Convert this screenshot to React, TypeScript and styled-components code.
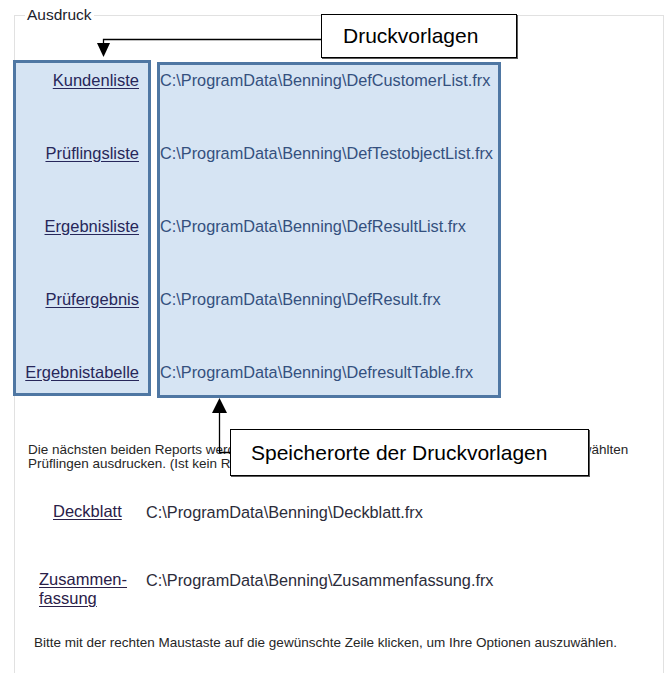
import styled, { createGlobalStyle } from "styled-components";

const GlobalStyle = createGlobalStyle`
	html, body {
		margin: 0;
		padding: 0;
		background: #ffffff;
		overflow: hidden;
	}
	body {
		font-family: "Liberation Sans", Arial, sans-serif;
		color: #222222;
	}
`;

const Page = styled.div`
	position: relative;
	width: 669px;
	height: 673px;
	padding-top: 6px;
	box-sizing: border-box;
	overflow: hidden;
`;

const GroupBox = styled.fieldset`
	margin: 0 5px 0 14px;
	padding: 0;
	min-height: 720px;
	border: 1px solid #e1e1e1;
	box-sizing: border-box;
`;

const Legend = styled.legend`
	margin-left: 10px;
	padding: 0 2px;
	font-size: 15.5px;
	line-height: 18px;
	color: #1c1c2c;
`;

const Templates = styled.div`
	display: flex;
	align-items: flex-start;
	gap: 6px;
	margin: 36px 0 0 -2px;
`;

const HighlightBox = styled.div<{ $width: number; $pad: string; $shift?: number }>`
	display: grid;
	grid-auto-rows: 20px;
	row-gap: 53px;
	width: ${(p) => p.$width}px;
	margin-top: ${(p) => p.$shift || 0}px;
	padding: ${(p) => p.$pad};
	box-sizing: border-box;
	border: 3px solid #4f77a3;
	background: #d6e4f3;
`;

const LabelCell = styled.div`
	justify-self: end;
	font-size: 16.5px;
	line-height: 20px;
	white-space: nowrap;
`;

const Link = styled.span<{ $inBox?: boolean }>`
	color: ${(p) => (p.$inBox ? "#27275a" : "#2a2048")};
	text-decoration: underline;
	text-underline-offset: 2px;
	cursor: pointer;
`;

const PathText = styled.div<{ $inBox?: boolean }>`
	font-size: 16.3px;
	line-height: 20px;
	white-space: nowrap;
	color: ${(p) => (p.$inBox ? "#34507e" : "#2c2c3a")};
`;

const Note = styled.p`
	margin: 45px 0 0 13px;
	font-size: 13.5px;
	line-height: 14px;
	white-space: nowrap;
	color: #262626;
`;

const ExtraList = styled.div`
	display: grid;
	grid-template-columns: 90px auto;
	column-gap: 17px;
	row-gap: 48px;
	margin: 31px 0 0 24px;
	align-items: start;
`;

const ExtraLabel = styled.div<{ $indent?: number }>`
	padding-left: ${(p) => p.$indent || 0}px;
	font-size: 16.5px;
	line-height: 19px;
	white-space: nowrap;
`;

const Hint = styled.p`
	margin: 28px 0 0 19px;
	font-size: 13.5px;
	line-height: 14px;
	white-space: nowrap;
	color: #262626;
`;

const Arrows = styled.svg`
	position: absolute;
	left: 0;
	top: 0;
	pointer-events: none;
`;

const Callout = styled.div<{ $x: number; $y: number; $w: number; $h: number; $pad: number }>`
	position: absolute;
	left: ${(p) => p.$x}px;
	top: ${(p) => p.$y}px;
	width: ${(p) => p.$w}px;
	height: ${(p) => p.$h}px;
	padding-left: ${(p) => p.$pad}px;
	box-sizing: border-box;
	display: flex;
	align-items: center;
	background: #ffffff;
	border: 1px solid #000000;
	box-shadow: 1px 1px 0 #5a5a5a;
	font-size: 21px;
	color: #000000;
	white-space: nowrap;
`;

const templates = [
	{ name: "Kundenliste", file: "DefCustomerList.frx" },
	{ name: "Prüflingsliste", file: "DefTestobjectList.frx" },
	{ name: "Ergebnisliste", file: "DefResultList.frx" },
	{ name: "Prüfergebnis", file: "DefResult.frx" },
	{ name: "Ergebnistabelle", file: "DefresultTable.frx" },
];

const base = "C:\\ProgramData\\Benning\\";

const App = () => {
	return (
		<Page>
			<GlobalStyle />
			<GroupBox>
				<Legend>Ausdruck</Legend>
				<Templates>
					<HighlightBox $width={138} $pad="7px 9px 11px 0">
						{templates.map((t) => (
							<LabelCell key={t.name}>
								<Link $inBox>{t.name}</Link>
							</LabelCell>
						))}
					</HighlightBox>
					<HighlightBox $width={344} $pad="5px 0 13px 0" $shift={2}>
						{templates.map((t) => (
							<PathText key={t.file} $inBox>
								{base + t.file}
							</PathText>
						))}
					</HighlightBox>
				</Templates>
				<Note>
					Die nächsten beiden Reports werden nur für die im Hauptfenster markierten und dann ausgewählten
					<br />
					Prüflingen ausdrucken. (Ist kein Rahmen gewählt, werden alle Prüflinge gedruckt.)
				</Note>
				<ExtraList>
					<ExtraLabel $indent={14}>
						<Link>Deckblatt</Link>
					</ExtraLabel>
					<PathText>{base + "Deckblatt.frx"}</PathText>
					<ExtraLabel>
						<Link>
							Zusammen-
							<br />
							fassung
						</Link>
					</ExtraLabel>
					<PathText>{base + "Zusammenfassung.frx"}</PathText>
				</ExtraList>
				<Hint>
					Bitte mit der rechten Maustaste auf die gewünschte Zeile klicken, um Ihre Optionen auszuwählen.
				</Hint>
			</GroupBox>

			<Arrows width="669" height="673" viewBox="0 0 669 673">
				<path d="M321 39.5 H103.5 V44" fill="none" stroke="#000" strokeWidth="1.3" />
				<polygon points="97,43 110,43 103.5,57" fill="#000" />
				<path d="M219.5 412 V452.5 H230" fill="none" stroke="#000" strokeWidth="1.3" />
				<polygon points="212,413 227,413 219.5,398" fill="#000" />
			</Arrows>
			<Callout $x={321} $y={14} $w={196} $h={44} $pad={21}>
				Druckvorlagen
			</Callout>
			<Callout $x={230} $y={429} $w={359} $h={47} $pad={20}>
				Speicherorte der Druckvorlagen
			</Callout>
		</Page>
	);
};

export default App;
